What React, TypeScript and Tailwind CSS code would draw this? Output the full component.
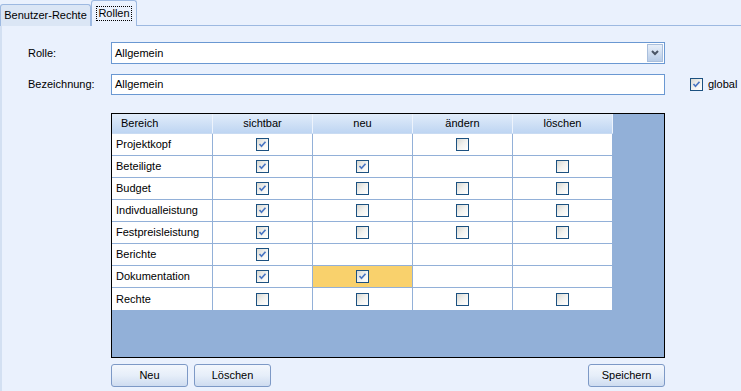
import React from 'react';

type Cell = boolean | null;

const rows: { name: string; cells: Cell[]; hot?: number }[] = [
  { name: 'Projektkopf', cells: [true, null, false, null] },
  { name: 'Beteiligte', cells: [true, true, null, false] },
  { name: 'Budget', cells: [true, false, false, false] },
  { name: 'Indivdualleistung', cells: [true, false, false, false] },
  { name: 'Festpreisleistung', cells: [true, false, false, false] },
  { name: 'Berichte', cells: [true, null, null, null] },
  { name: 'Dokumentation', cells: [true, true, null, null], hot: 1 },
  { name: 'Rechte', cells: [false, false, false, false] },
];

const columns = ['sichtbar', 'neu', 'ändern', 'löschen'];

const Check: React.FC<{ checked: boolean }> = ({ checked }) => (
  <span className="w-[13px] h-[13px] border border-[#1C5180] bg-gradient-to-br from-[#D8D8D2] via-[#F2F2EF] to-white flex items-center justify-center">
    {checked && (
      <svg width="9" height="9" viewBox="0 0 9 9">
        <path d="M1.5 4 L3.5 6.2 L7.5 1.8" stroke="#4A76C2" strokeWidth="1.7" fill="none" />
      </svg>
    )}
  </span>
);

const Button: React.FC<{ label: string }> = ({ label }) => (
  <button className="w-[77px] h-[23px] rounded-[3px] border border-[#7D99C6] bg-gradient-to-b from-[#F3F7FD] via-[#E6EEF9] to-[#CEDCF0] text-[11px] text-black">
    {label}
  </button>
);

const App: React.FC = () => {
  return (
    <div className="w-[741px] h-[391px] bg-[#EAF1FD] flex flex-col overflow-hidden text-[11px] text-black" style={{ fontFamily: '"Liberation Sans", Arial, sans-serif' }}>
      {/* tabs */}
      <div className="h-[26px] flex items-end border-b border-[#9DB9E1]">
        <div className="w-[91px] h-[22px] border border-b-0 border-[#9DB9E1] rounded-t-[3px] bg-[#DBE6F5] flex items-center justify-center -mb-px">
          Benutzer-Rechte
        </div>
        <div className="w-[46px] h-[26px] border border-b-0 border-[#9DB9E1] rounded-t-[3px] bg-[#EAF1FD] flex items-center justify-center -mb-px">
          <span className="border border-dotted border-black px-px leading-[13px]">Rollen</span>
        </div>
      </div>

      {/* panel */}
      <div className="flex-1 border-l-2 border-[#D3E0F2] pl-[26px] pt-[16px] flex flex-col">
        <div className="flex items-center h-[22px]">
          <div className="w-[83px]">Rolle:</div>
          <div className="w-[554px] h-[22px] border border-[#6A98D2] bg-white flex items-center">
            <span className="flex-1 pl-[3px]">Allgemein</span>
            <span className="w-[16px] h-[18px] mr-px border border-[#A9BFDD] bg-gradient-to-b from-[#E8EFF9] to-[#B9CDE8] flex items-center justify-center">
              <svg width="8" height="6" viewBox="0 0 8 6">
                <path d="M1 1 L4 4 L7 1" stroke="#4A5566" strokeWidth="2" fill="none" />
              </svg>
            </span>
          </div>
        </div>

        <div className="flex items-center h-[21px] mt-[10px]">
          <div className="w-[83px]">Bezeichnung:</div>
          <div className="w-[554px] h-[21px] border border-[#6A98D2] bg-white flex items-center pl-[3px]">Allgemein</div>
          <div className="ml-[25px] flex items-center gap-[5px]">
            <Check checked />
            <span>global</span>
          </div>
        </div>

        {/* grid */}
        <div className="ml-[83px] mt-[18px] w-[554px] h-[245px] border border-black bg-[#92B0D8] flex flex-col">
          <div className="w-[501px] h-[20px] flex bg-gradient-to-b from-[#E1ECFA] to-[#BED5F2] border-b border-[#C9DBF2]">
            <div className="w-[101px] pl-[9px] flex items-center border-r border-[#EDF3FC]">Bereich</div>
            {columns.map((c) => (
              <div key={c} className="w-[100px] flex items-center justify-center border-r border-[#EDF3FC]">
                {c}
              </div>
            ))}
          </div>
          {rows.map((r) => (
            <div key={r.name} className="w-[501px] h-[22px] flex bg-white border-b border-[#92B0D8] last:border-b-0">
              <div className="w-[101px] pl-[4px] flex items-center border-r border-[#92B0D8]">{r.name}</div>
              {r.cells.map((c, i) => (
                <div
                  key={i}
                  className={`w-[100px] flex items-center justify-center border-r border-[#92B0D8] ${r.hot === i ? 'bg-[#F9D16C]' : ''}`}
                >
                  {c !== null && <Check checked={c} />}
                </div>
              ))}
            </div>
          ))}
        </div>

        <div className="ml-[83px] mt-[6px] w-[554px] flex">
          <Button label="Neu" />
          <div className="ml-[6px]">
            <Button label="Löschen" />
          </div>
          <div className="ml-auto">
            <Button label="Speichern" />
          </div>
        </div>
      </div>
    </div>
  );
};

export default App;
